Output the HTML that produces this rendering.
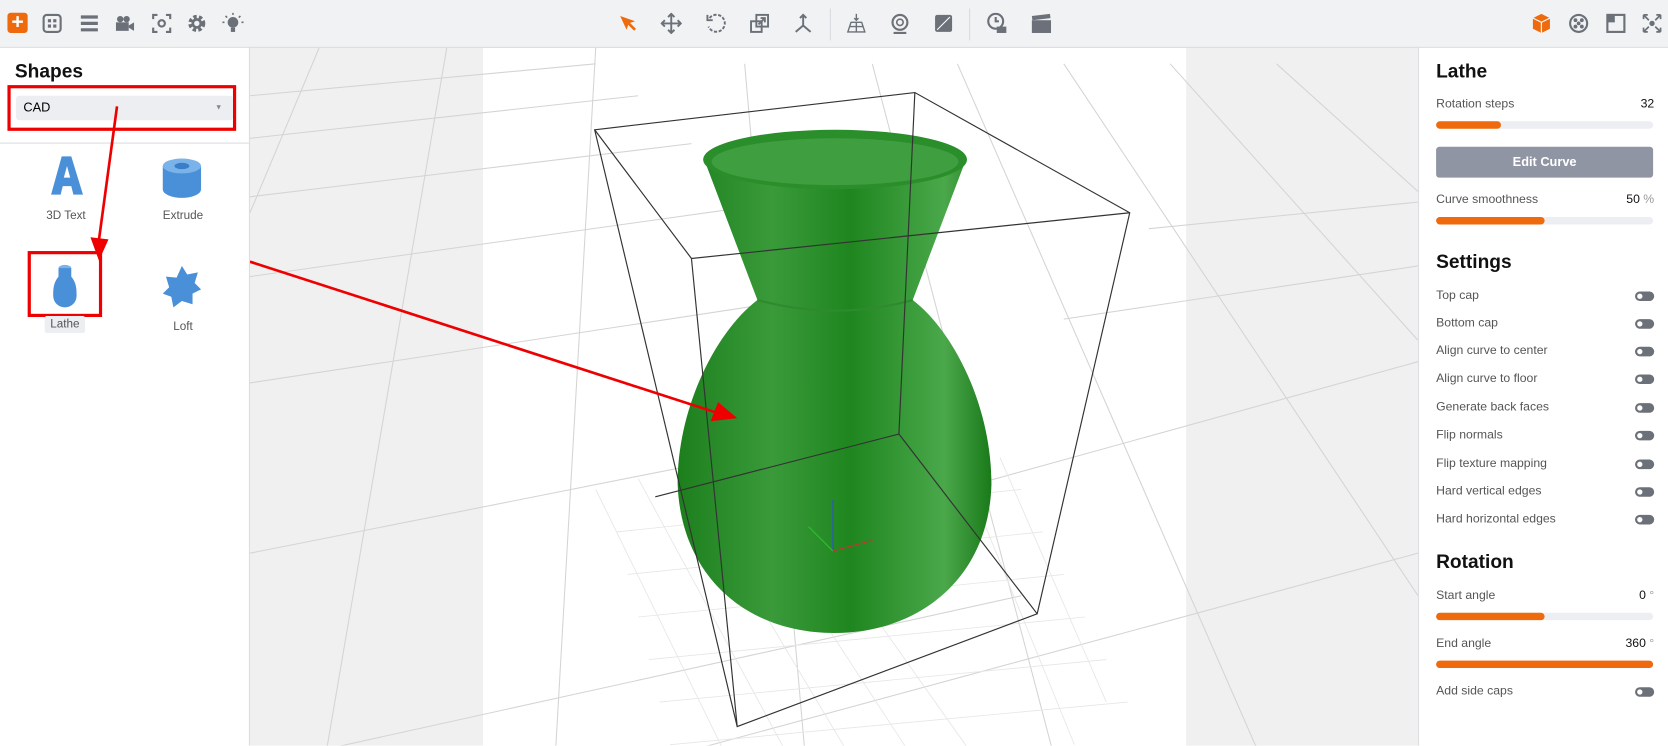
<!DOCTYPE html><html><head><style>
body{margin:0;width:1668px;height:746px;overflow:hidden;font-family:"Liberation Sans",sans-serif;background:#fff;position:relative}
#w{position:absolute;left:0;top:0;width:1568px;height:701px;transform:scale(1.06378);transform-origin:0 0;overflow:hidden}
.tb{position:absolute;left:0;top:0;width:1568px;height:44px;background:#f1f2f4;border-bottom:1px solid #d8dadf}
.ic{position:absolute;top:12px;width:20px;height:20px}
.lp{position:absolute;left:0;top:45px;width:234px;height:656px;background:#fff;border-right:1px solid #dcdde1}
.rp{position:absolute;left:1333px;top:45px;width:235px;height:656px;background:#fff;border-left:1px solid #dcdde1}
h2{margin:0;font-size:18px;font-weight:bold;color:#111;position:absolute}
.lbl{position:absolute;left:16px;font-size:11.5px;color:#555}
.val{position:absolute;right:14px;font-size:11.5px;color:#111}
.bar{position:absolute;left:16px;width:204px;height:7px;border-radius:4px;background:#eceef2}
.bar i{display:block;height:7px;border-radius:4px;background:#ee6a0c}
.tg{position:absolute;right:14px;width:18px;height:9px;border-radius:5px;background:#6b7079}
.tg:after{content:"";position:absolute;left:2px;top:2px;width:5px;height:5px;border-radius:50%;background:#fff}
</style></head><body><div id="w">
<div class="tb">
<div style="position:absolute;left:7px;top:12px;width:19px;height:19px;background:#ee6a0c;border-radius:3px;color:#fff;font-size:20px;line-height:18px;text-align:center;font-weight:bold">+</div>
<svg class="ic" style="left:39px" viewBox="0 0 20 20"><rect x="2" y="2" width="16" height="16" rx="3" fill="none" stroke="#6b7079" stroke-width="2"/><rect x="6" y="6" width="3" height="3" fill="#6b7079"/><rect x="11" y="6" width="3" height="3" fill="#6b7079"/><rect x="6" y="11" width="3" height="3" fill="#6b7079"/><rect x="11" y="11" width="3" height="3" fill="#6b7079"/></svg>
<svg class="ic" style="left:74px" viewBox="0 0 20 20"><path d="M2 4h16M2 10h16M2 16h16" stroke="#6b7079" stroke-width="3"/></svg>
<svg class="ic" style="left:107px" viewBox="0 0 20 20"><circle cx="6" cy="6" r="3" fill="#6b7079"/><circle cx="12" cy="6" r="3" fill="#6b7079"/><rect x="2" y="9" width="12" height="8" fill="#6b7079"/><path d="M14 12l5-3v8l-5-3z" fill="#6b7079"/></svg>
<svg class="ic" style="left:142px" viewBox="0 0 20 20"><path d="M2 6V2h4M14 2h4v4M18 14v4h-4M6 18H2v-4" stroke="#6b7079" stroke-width="2" fill="none"/><circle cx="10" cy="10" r="3" stroke="#6b7079" stroke-width="2" fill="none"/></svg>
<svg class="ic" style="left:175px" viewBox="0 0 20 20"><circle cx="10" cy="10" r="6" stroke="#6b7079" stroke-width="4" fill="none" stroke-dasharray="3 2"/><circle cx="10" cy="10" r="5" fill="#6b7079"/><circle cx="10" cy="10" r="2.5" fill="#f1f2f4"/></svg>
<svg class="ic" style="left:209px" viewBox="0 0 20 20"><circle cx="10" cy="9" r="5" fill="#6b7079"/><rect x="8" y="14" width="4" height="4" fill="#6b7079"/><path d="M10 0v2M2 9H0M20 9h-2M3 3l1.5 1.5M17 3l-1.5 1.5" stroke="#6b7079" stroke-width="1.5"/></svg>
<svg class="ic" style="left:580px" viewBox="0 0 20 20"><path d="M3 3l14 5-6 2-2 6z" fill="#ee6a0c"/><path d="M11 10l6 6" stroke="#ee6a0c" stroke-width="2.5"/></svg>
<svg class="ic" style="left:621px" viewBox="0 0 20 20"><path d="M10 1v18M1 10h18M7 4l3-3 3 3M7 16l3 3 3-3M4 7l-3 3 3 3M16 7l3 3-3 3" stroke="#6b7079" stroke-width="1.8" fill="none"/></svg>
<svg class="ic" style="left:663px" viewBox="0 0 20 20"><path d="M4 5a8 8 0 1 1-1 8" stroke="#6b7079" stroke-width="1.8" fill="none" stroke-dasharray="3 1.5"/><path d="M2 2v5h5" stroke="#6b7079" stroke-width="1.8" fill="none"/></svg>
<svg class="ic" style="left:704px" viewBox="0 0 20 20"><rect x="2" y="8" width="10" height="10" stroke="#6b7079" stroke-width="1.8" fill="none"/><rect x="7" y="2" width="11" height="11" stroke="#6b7079" stroke-width="1.8" fill="none"/><path d="M9 11l6-6M11 5h4v4" stroke="#6b7079" stroke-width="1.8" fill="none"/></svg>
<svg class="ic" style="left:745px" viewBox="0 0 20 20"><path d="M10 2v10M10 12l-7 6M10 12l7 6M7 5l3-3 3 3" stroke="#6b7079" stroke-width="1.8" fill="none"/></svg>
<div style="position:absolute;left:780px;top:8px;width:1px;height:30px;background:#d8dadf"></div>
<svg class="ic" style="left:795px" viewBox="0 0 20 20"><path d="M2 18l3-9h10l3 9zM10 9v9M4 13h12M10 1v6M8 5l2 2 2-2" stroke="#6b7079" stroke-width="1.3" fill="none"/></svg>
<svg class="ic" style="left:836px" viewBox="0 0 20 20"><circle cx="10" cy="9" r="7" stroke="#6b7079" stroke-width="2" fill="none"/><circle cx="10" cy="9" r="3" stroke="#6b7079" stroke-width="1.5" fill="none"/><path d="M4 19h12" stroke="#6b7079" stroke-width="2"/></svg>
<svg class="ic" style="left:877px" viewBox="0 0 20 20"><rect x="2" y="2" width="16" height="16" rx="2" fill="#6b7079"/><path d="M4 16L16 4" stroke="#fff" stroke-width="1"/></svg>
<div style="position:absolute;left:911px;top:8px;width:1px;height:30px;background:#d8dadf"></div>
<svg class="ic" style="left:927px" viewBox="0 0 20 20"><circle cx="9" cy="8" r="7" stroke="#6b7079" stroke-width="2" fill="none"/><path d="M9 4v4h3" stroke="#6b7079" stroke-width="2" fill="none"/><rect x="10" y="13" width="9" height="6" fill="#6b7079"/></svg>
<svg class="ic" style="left:969px" viewBox="0 0 20 20"><rect x="1" y="7" width="18" height="12" fill="#6b7079"/><path d="M1 3l17-2 0.5 4-17 2z" fill="#6b7079"/></svg>
<svg class="ic" style="left:1439px" viewBox="0 0 20 20"><path d="M10 1l8 4v10l-8 4-8-4V5z" fill="#ee6a0c"/><path d="M2 5l8 4 8-4M10 9v10" stroke="#f1f2f4" stroke-width="1.2" fill="none"/></svg>
<svg class="ic" style="left:1474px" viewBox="0 0 20 20"><circle cx="10" cy="10" r="8" stroke="#6b7079" stroke-width="2" fill="none"/><circle cx="7" cy="7" r="1.8" fill="#6b7079"/><circle cx="13" cy="7" r="1.8" fill="#6b7079"/><circle cx="7" cy="13" r="1.8" fill="#6b7079"/><circle cx="13" cy="13" r="1.8" fill="#6b7079"/><circle cx="10" cy="10" r="1.8" fill="#6b7079"/></svg>
<svg class="ic" style="left:1509px" viewBox="0 0 20 20"><rect x="2" y="2" width="16" height="16" stroke="#6b7079" stroke-width="2" fill="none"/><path d="M2 2h7v7H2z" fill="#6b7079"/></svg>
<svg class="ic" style="left:1543px" viewBox="0 0 20 20"><path d="M2 2l5 5M18 2l-5 5M2 18l5-5M18 18l-5-5M2 2h4M2 2v4M18 2h-4M18 2v4M2 18h4M2 18v-4M18 18h-4M18 18v-4" stroke="#6b7079" stroke-width="1.6" fill="none"/><circle cx="10" cy="10" r="2.5" fill="#6b7079"/></svg>
</div>

<svg style="position:absolute;left:235px;top:45px" width="1098" height="656" viewBox="235 45 1098 656">
<rect x="235" y="45" width="1098" height="701" fill="#fff"/>
<rect x="235" y="45" width="219" height="701" fill="#f0f0f0"/>
<rect x="1115" y="45" width="218" height="701" fill="#f0f0f0"/>
<g stroke="#d4d4d4" stroke-width="1" fill="none">
<path d="M235 90L560 60M235 130L600 90M235 185L650 135M235 260L700 195M235 360L760 280M235 520L840 400M235 720L960 560M500 746L1333 520M1333 340L900 460M1333 250L1000 300M1333 190L1080 215"/>
<path d="M300 45L235 200M420 45L300 746M560 45L520 746M700 60L760 746M820 60L1000 746M900 60L1200 746M1000 60L1333 560M1100 60L1333 320M1200 60L1333 180"/>
</g>
<g stroke="#e6e6e6" stroke-width="0.8">
<path d="M560 460L700 746M600 450L760 746M640 445L820 746M680 440L880 746M720 435L940 746M900 430L1010 700M940 430L1040 660M580 500L960 460M590 540L980 500M600 580L1000 540M610 620L1020 580M620 660L1040 620M630 700L1060 660"/>
</g>
<defs><linearGradient id="g" x1="0" x2="1"><stop offset="0" stop-color="#1c7f1c"/><stop offset=".3" stop-color="#3a9a3a"/><stop offset=".55" stop-color="#1f861f"/><stop offset=".85" stop-color="#4aa84a"/><stop offset="1" stop-color="#1a7a1a"/></linearGradient></defs>
<path d="M662 150L712 282C675 310 637 380 637 455C640 540 700 595 784 595C868 595 930 540 932 455C932 380 895 310 858 282L908 150Z" fill="url(#g)"/>
<ellipse cx="785" cy="150" rx="124" ry="28" fill="#2a8e2a"/>
<ellipse cx="785" cy="152" rx="116" ry="22" fill="#3f9e3f"/>
<path d="M712 282Q785 302 858 282" stroke="#2f8a2f" stroke-width="2" fill="none"/>
<g stroke="#333" stroke-width="1.1" fill="none">
<path d="M559 122L860 87L1062 200L975 577L693 683L559 122Z"/>
<path d="M559 122L650 243L1062 200M650 243L693 683"/>
<path d="M860 87L845 408L616 467M845 408L975 577"/>
</g>
<path d="M783 518V470" stroke="#3050d0"/><path d="M783 518L760 495" stroke="#30c030"/><path d="M783 518L820 508" stroke="#d03030"/>
<path d="M235 246L680 390" stroke="#e00" stroke-width="2.5"/>
<path d="M693 393L668 396L675 378Z" fill="#e00"/>
</svg>

<div class="lp">
<h2 style="left:14px;top:12px">Shapes</h2>
<div style="position:absolute;left:7px;top:35px;width:215px;height:43px;border:3px solid #e00;box-sizing:border-box"></div>
<div style="position:absolute;left:15px;top:45px;width:204px;height:23px;background:#eceef1;border-radius:3px;font-size:12px;line-height:23px;padding-left:7px;box-sizing:border-box">CAD<span style="position:absolute;right:10px;font-size:7px;color:#888">▼</span></div>
<div style="position:absolute;left:0;top:89px;width:234px;height:1px;background:#dcdde1"></div>
<svg style="position:absolute;left:45px;top:100px" width="35" height="40"><path d="M3 38L13 2h9l11 36h-9l-2-8H14l-2 8z" fill="#4a90d9"/><path d="M15 22h6l-3-11z" fill="#fff"/></svg>
<div style="position:absolute;left:0;top:152px;width:124px;text-align:center;font-size:11px;color:#555">3D Text</div>
<svg style="position:absolute;left:152px;top:103px" width="38" height="40"><path d="M1 8v22a18 8 0 0 0 36 0V8z" fill="#4a90d9"/><ellipse cx="19" cy="8" rx="18" ry="7" fill="#7ab3ea"/><ellipse cx="19" cy="8" rx="7" ry="3" fill="#3a7ec8"/></svg>
<div style="position:absolute;left:110px;top:152px;width:124px;text-align:center;font-size:11px;color:#555">Extrude</div>
<div style="position:absolute;left:26px;top:191px;width:70px;height:62px;border:3px solid #e00;box-sizing:border-box"></div>
<svg style="position:absolute;left:48px;top:203px" width="26" height="42"><ellipse cx="13" cy="4" rx="6" ry="3" fill="#7ab3ea"/><path d="M7 4v8C2 18 2 24 2 30a11 11 0 0 0 22 0c0-6 0-12-5-18V4z" fill="#4a90d9"/></svg>
<div style="position:absolute;left:42px;top:252px;width:38px;height:16px;background:#eceef1;border-radius:2px;font-size:11px;color:#555;text-align:center;line-height:16px">Lathe</div>
<svg style="position:absolute;left:152px;top:205px" width="38" height="40"><path d="M19 0l5 8 10-2-3 10 6 6-8 4 0 10-10-3-8 6-2-10-8-3 6-6-3-10 10 1z" fill="#4a90d9"/></svg>
<div style="position:absolute;left:110px;top:256px;width:124px;text-align:center;font-size:11px;color:#555">Loft</div>
<svg style="position:absolute;left:80px;top:50px" width="40" height="150"><path d="M30 5L12 138" stroke="#e00" stroke-width="2.5"/><path d="M5 128l8 22 9-20z" fill="#e00"/></svg>
</div>

<div class="rp">
<h2 style="left:16px;top:12px">Lathe</h2>
<div class="lbl" style="top:47px">Rotation steps</div><div class="val" style="top:47px">32</div>
<div class="bar" style="top:69px"><i style="width:61px"></i></div>
<div style="position:absolute;left:16px;top:93px;width:204px;height:29px;background:#8f95a3;border-radius:3px;color:#fff;font-size:12px;font-weight:bold;text-align:center;line-height:29px">Edit Curve</div>
<div class="lbl" style="top:137px">Curve smoothness</div><div class="val" style="top:137px">50 <span style="color:#999">%</span></div>
<div class="bar" style="top:159px"><i style="width:102px"></i></div>
<h2 style="left:16px;top:191px">Settings</h2>
<div class="lbl" style="top:227px">Top cap</div><div class="tg" style="top:229px"></div>
<div class="lbl" style="top:253px">Bottom cap</div><div class="tg" style="top:255px"></div>
<div class="lbl" style="top:279px">Align curve to center</div><div class="tg" style="top:281px"></div>
<div class="lbl" style="top:305px">Align curve to floor</div><div class="tg" style="top:307px"></div>
<div class="lbl" style="top:332px">Generate back faces</div><div class="tg" style="top:334px"></div>
<div class="lbl" style="top:358px">Flip normals</div><div class="tg" style="top:360px"></div>
<div class="lbl" style="top:385px">Flip texture mapping</div><div class="tg" style="top:387px"></div>
<div class="lbl" style="top:411px">Hard vertical edges</div><div class="tg" style="top:413px"></div>
<div class="lbl" style="top:437px">Hard horizontal edges</div><div class="tg" style="top:439px"></div>
<h2 style="left:16px;top:473px">Rotation</h2>
<div class="lbl" style="top:509px">Start angle</div><div class="val" style="top:509px">0 <span style="color:#999">°</span></div>
<div class="bar" style="top:531px"><i style="width:102px"></i></div>
<div class="lbl" style="top:554px">End angle</div><div class="val" style="top:554px">360 <span style="color:#999">°</span></div>
<div class="bar" style="top:576px"><i style="width:204px"></i></div>
<div class="lbl" style="top:599px">Add side caps</div><div class="tg" style="top:601px"></div>
</div>
</div></body></html>
